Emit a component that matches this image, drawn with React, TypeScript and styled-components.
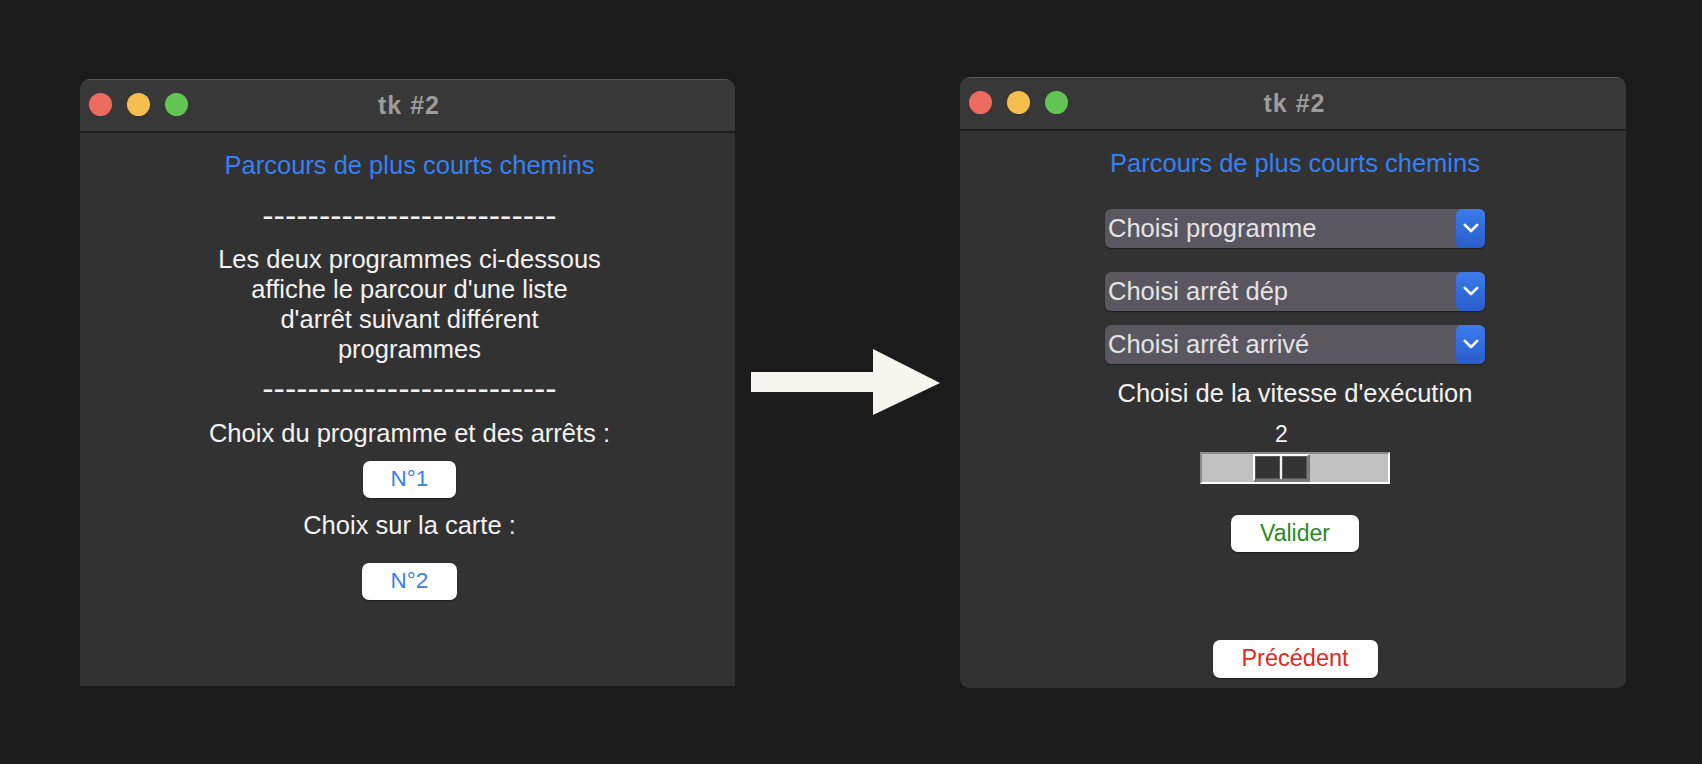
import React from 'react';
import styled, { createGlobalStyle } from 'styled-components';

const GlobalStyle = createGlobalStyle`
  html, body {
    margin: 0;
    padding: 0;
    background: #1b1b1b;
  }
  body {
    font-family: "Liberation Sans", Arial, sans-serif;
  }
`;

const TkWindow: React.FC<{ width: number; height: number; bottomRadius: number; children: React.ReactNode }> = ({ width, height, bottomRadius, children }) => (
    <WindowFrame $w={width} $h={height} $bottomRadius={bottomRadius}>
        <TitleBar>
            <Lights>
                <Light $color="#ed6a5e" />
                <Light $color="#f5bf4f" />
                <Light $color="#61c554" />
            </Lights>
            <Title>tk #2</Title>
            <span />
        </TitleBar>
        <Content>{children}</Content>
    </WindowFrame>
);

const Dropdown: React.FC<{ label: string; mt: number }> = ({ label, mt }) => (
    <Select $mt={mt}>
        <SelectText>{label}</SelectText>
        <SelectArrow>
            <svg width="16" height="10" viewBox="0 0 16 10">
                <polyline points="1.8,1.8 8,8 14.2,1.8" fill="none" stroke="#fff" strokeWidth="2.6" strokeLinecap="round" strokeLinejoin="round" />
            </svg>
        </SelectArrow>
    </Select>
);

const SpeedScale: React.FC<{ value: number; offset: number }> = ({ value, offset }) => (
    <ScaleBox>
        <ScaleValue $offset={offset}>{value}</ScaleValue>
        <Trough>
            <Thumb $offset={offset - 2}>
                <ThumbHalf />
                <ThumbDivider />
                <ThumbHalf />
            </Thumb>
        </Trough>
    </ScaleBox>
);

const App: React.FC = () => {
    return (
        <>
            <GlobalStyle />
            <Stage>
                <TkWindow width={655} height={607} bottomRadius={0}>
                    <Heading>Parcours de plus courts chemins</Heading>
                    <Dashes $mt={20}>--------------------------</Dashes>
                    <Paragraph $mt={14}>
                        {"Les deux programmes ci-dessous\naffiche le parcour d'une liste\nd'arrêt suivant différent\nprogrammes"}
                    </Paragraph>
                    <Dashes $mt={9}>--------------------------</Dashes>
                    <Label $mt={15}>Choix du programme et des arrêts :</Label>
                    <TkButton $mt={13} $w={93} $color="#3581f6" $size={22.5}>N°1</TkButton>
                    <Label $mt={12}>Choix sur la carte :</Label>
                    <TkButton $mt={23} $w={95} $color="#3581f6" $size={22.5}>N°2</TkButton>
                </TkWindow>

                <Arrow>
                    <svg width="189" height="66" viewBox="0 0 189 66">
                        <rect x="0" y="23" width="123" height="20" fill="#f7f5f0" />
                        <polygon points="122,0 189,34 122,66" fill="#f7f5f0" />
                    </svg>
                </Arrow>

                <TkWindow width={666} height={611} bottomRadius={9}>
                    <Heading>Parcours de plus courts chemins</Heading>
                    <Dropdown label="Choisi programme" mt={31} />
                    <Dropdown label="Choisi arrêt dép" mt={24} />
                    <Dropdown label="Choisi arrêt arrivé" mt={14} />
                    <Label $mt={14}>Choisi de la vitesse d'exécution</Label>
                    <SpeedScale value={2} offset={53} />
                    <TkButton $mt={31} $w={128} $color="#2b8a22" $size={23}>Valider</TkButton>
                    <TkButton $mt={88} $w={165} $h={38} $color="#e8261e" $size={23.5}>Précédent</TkButton>
                </TkWindow>
            </Stage>
        </>
    );
};

const Stage = styled.div`
    height: 764px;
    box-sizing: border-box;
    padding-left: 80px;
    display: flex;
    align-items: center;
    background: #1b1b1b;
`;

const WindowFrame = styled.div<{ $w: number; $h: number; $bottomRadius: number }>`
    width: ${p => p.$w}px;
    height: ${p => p.$h}px;
    flex-shrink: 0;
    display: flex;
    flex-direction: column;
    overflow: hidden;
    background: #323232;
    border-radius: 10px 10px ${p => p.$bottomRadius}px ${p => p.$bottomRadius}px;
`;

const TitleBar = styled.div`
    height: 52px;
    flex-shrink: 0;
    display: grid;
    grid-template-columns: 1fr auto 1fr;
    align-items: center;
    padding: 0 9px;
    background: #383838;
    border-bottom: 2px solid #1c1c1c;
    box-shadow: inset 0 1px 0 #575757;
`;

const Lights = styled.div`
    display: flex;
    gap: 15px;
`;

const Light = styled.span<{ $color: string }>`
    width: 23px;
    height: 23px;
    border-radius: 50%;
    background: ${p => p.$color};
`;

const Title = styled.div`
    padding-left: 3px;
    font-size: 25px;
    font-weight: bold;
    letter-spacing: 1px;
    line-height: 52px;
    color: #9b9b9b;
`;

const Content = styled.div`
    flex: 1;
    display: flex;
    flex-direction: column;
    align-items: center;
    padding: 17px 0 0 4px;
`;

const Heading = styled.div`
    font-size: 25.5px;
    line-height: 30px;
    color: #3581f6;
    white-space: nowrap;
`;

const Dashes = styled.div<{ $mt: number }>`
    margin-top: ${p => p.$mt}px;
    height: 30px;
    font-size: 34px;
    line-height: 30px;
    color: #f2f2f2;
    white-space: nowrap;
`;

const Paragraph = styled.div<{ $mt: number }>`
    margin-top: ${p => p.$mt}px;
    font-size: 25.5px;
    line-height: 30px;
    text-align: center;
    white-space: pre-line;
    color: #f2f2f2;
`;

const Label = styled.div<{ $mt: number }>`
    margin-top: ${p => p.$mt}px;
    font-size: 25.5px;
    line-height: 30px;
    white-space: nowrap;
    color: #f2f2f2;
`;

const TkButton = styled.button<{ $mt: number; $w: number; $h?: number; $color: string; $size: number }>`
    margin-top: ${p => p.$mt}px;
    width: ${p => p.$w}px;
    height: ${p => p.$h ?? 37}px;
    padding: 0;
    border: none;
    border-radius: 7px;
    background: #ffffff;
    box-shadow: 0 1px 1.5px rgba(0, 0, 0, 0.45);
    font-family: "Liberation Sans", Arial, sans-serif;
    font-size: ${p => p.$size}px;
    color: ${p => p.$color};
`;

const Arrow = styled.div`
    margin: 0 20px 0 16px;
    display: flex;
    flex-shrink: 0;
`;

const Select = styled.div<{ $mt: number }>`
    margin-top: ${p => p.$mt}px;
    width: 380px;
    height: 39px;
    display: flex;
    align-items: stretch;
    border-radius: 6px;
    background: #5a5760;
    box-shadow: 0 1px 1.5px rgba(0, 0, 0, 0.5);
`;

const SelectText = styled.span`
    flex: 1;
    display: flex;
    align-items: center;
    padding-left: 3px;
    font-size: 25.5px;
    color: #e4e4e4;
    white-space: nowrap;
`;

const SelectArrow = styled.div`
    width: 29px;
    display: flex;
    align-items: center;
    justify-content: center;
    border-radius: 6px;
    background: linear-gradient(#3b7cec, #2a5ccc);
`;

const ScaleBox = styled.div`
    width: 190px;
    display: flex;
    flex-direction: column;
`;

const ScaleValue = styled.div<{ $offset: number }>`
    margin: 12px 0 4px ${p => p.$offset}px;
    width: 57px;
    text-align: center;
    font-size: 23px;
    line-height: 28px;
    color: #f2f2f2;
`;

const Trough = styled.div`
    height: 32px;
    box-sizing: border-box;
    display: flex;
    background: #c0c0c0;
    border-style: solid;
    border-width: 2px;
    border-color: #8c8c8c #ffffff #ffffff #8c8c8c;
`;

const Thumb = styled.div<{ $offset: number }>`
    margin-left: ${p => p.$offset}px;
    width: 57px;
    box-sizing: border-box;
    display: flex;
    background: #7a7a7a;
    border-style: solid;
    border-width: 2px 3px 3px 2px;
    border-color: #ffffff #7a7a7a #7a7a7a #ffffff;
`;

const ThumbHalf = styled.div`
    flex: 1;
    background: #343434;
    border: 1px solid #5a5a5a;
`;

const ThumbDivider = styled.div`
    width: 2px;
    background: #f0f0f0;
`;

export default App;
